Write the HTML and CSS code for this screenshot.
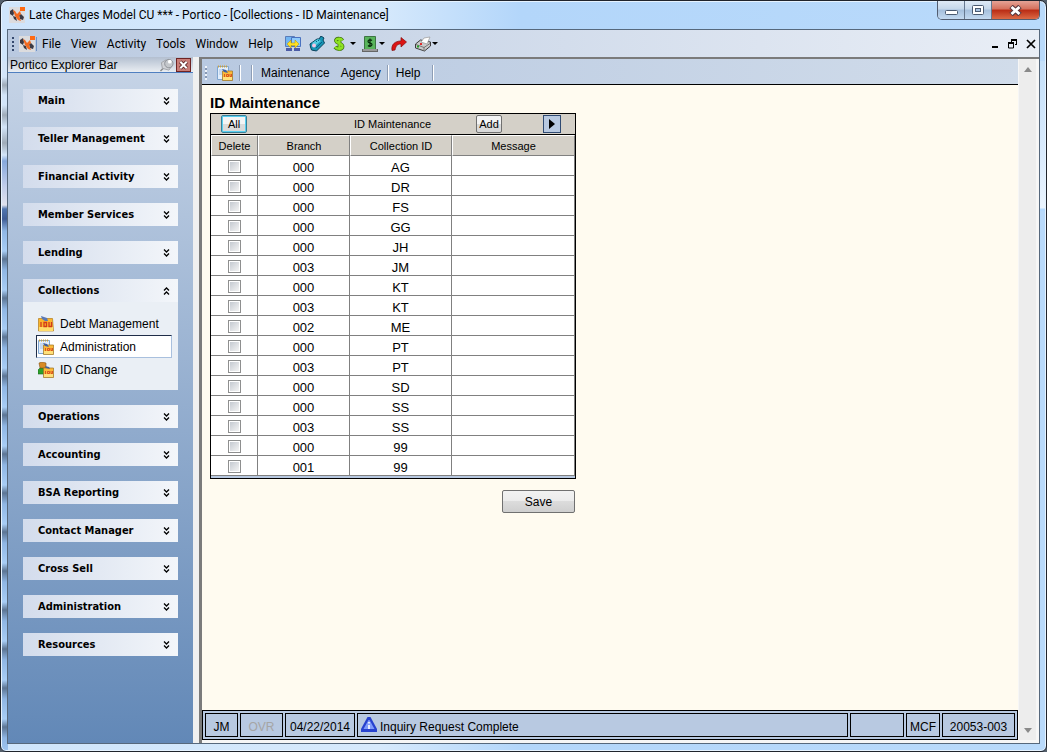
FILE: index.html
```html
<!DOCTYPE html>
<html lang="en">
<head>
    <meta charset="UTF-8">
    <meta name="viewport" content="width=device-width, initial-scale=1.0">
    <title>Late Charges Model CU *** - Portico - [Collections - ID Maintenance]</title>
    <link rel="stylesheet" href="styles.css">
</head>
<body>
    <!-- Shared icons -->
    <svg class="sprite" aria-hidden="true">
        <symbol id="i-app" viewBox="0 0 16 16">
            <rect width="16" height="16" fill="#dcdcde"/>
            <path d="M1 4l3-2 1 4-1 3-3-2zM4 9l3 1 1 4-3-2zM10 8l2-1 3 3-1 3-3-1z" fill="#3c3a44"/>
            <path d="M4 3l2 1 2 3 3-3 1 3-2 2 2 5-3-1-3-4-1-3z" fill="#f26a21"/>
            <rect x="11" width="5" height="4" fill="#ff6a13"/>
        </symbol>
        <symbol id="i-down" viewBox="0 0 7 8">
            <path d="M1 .5l2.500 2.500L6 .5M1 4.500l2.500 2.500L6 4.500" fill="none" stroke="#000" stroke-width="1.300"/>
        </symbol>
        <symbol id="i-up" viewBox="0 0 7 8">
            <path d="M1 3.500L3.500 1 6 3.500M1 7.500L3.500 5 6 7.500" fill="none" stroke="#000" stroke-width="1.300"/>
        </symbol>
        <symbol id="i-iou" viewBox="0 0 16 16">
            <path d="M.5 2.500h14l1 12.500h-15z" fill="#fbb52c" stroke="#b07c1c" stroke-width=".7"/>
            <path d="M1 11h14v4H1z" fill="#ffdc6b"/>
            <path d="M3 0l3 1 3 1 1 3-3 0-3-2z" fill="#5a78b4"/>
            <path d="M3 6v5M6 6.500v4h2.500v-4zM11 6v4.500h2.500V6" fill="none" stroke="#d23a1c" stroke-width="1.300"/>
        </symbol>
        <symbol id="i-note" viewBox="0 0 16 16">
            <path d="M.5 1.500h11v13H.5z" fill="#e2eefc" stroke="#7fa6d0"/>
            <path d="M1 1.500h10" stroke="#d0a13b" stroke-width="2" stroke-dasharray="1 1"/>
            <path d="M2 5h5M2 7h3M2 9h3" stroke="#a9c3e2"/>
            <path d="M5.500 6h10v9.500h-10z" fill="#fbb938" stroke="#9b7422" stroke-width=".7"/>
            <path d="M6 12h9v3H6z" fill="#ffe07a"/>
            <path d="M5 4l4 1 2 3-4-1z" fill="#3f5f9e"/>
            <path d="M7.500 9v3M9.500 9.500v2h2v-2zM13 9v2.500h1.500V9" fill="none" stroke="#d23a1c" stroke-width=".8"/>
        </symbol>
        <symbol id="i-person" viewBox="0 0 16 16">
            <path d="M0 12V8l2-2h5l2 2v4z" fill="#2da02b" stroke="#1d661d" stroke-width=".6"/>
            <path d="M1 1l3-1 4 1v5H2z" fill="#d88a24" stroke="#855314" stroke-width=".6"/>
            <path d="M5.500 6h10v9.500h-10z" fill="#fbb938" stroke="#9b7422" stroke-width=".7"/>
            <path d="M6 12h9v3H6z" fill="#ffe07a"/>
            <path d="M7 4l4 1 1 2-4-1z" fill="#3f5f9e"/>
            <path d="M7.500 9v3M9.500 9.500v2h2v-2zM13 9v2.500h1.500V9" fill="none" stroke="#d23a1c" stroke-width=".8"/>
        </symbol>
    </svg>

    <div class="window">
        <header class="titlebar">
            <svg class="icon"><use href="#i-app"/></svg>
            <h1 class="title">Late Charges Model CU *** - Portico - [Collections - ID Maintenance]</h1>
            <div class="caption">
                <button class="cap-btn" aria-label="Minimize">
                    <svg width="13" height="11"><rect x=".5" y="5.500" width="12" height="4" rx="1" fill="#fff" stroke="#4b5a70"/></svg>
                </button>
                <button class="cap-btn" aria-label="Maximize">
                    <svg width="13" height="11"><rect x=".5" y=".5" width="11" height="9" rx="1" fill="#fff" stroke="#4b5a70"/><rect x="3.500" y="3.500" width="5" height="3" fill="#a9c3e0" stroke="#4b5a70"/></svg>
                </button>
                <button class="cap-btn cap-close" aria-label="Close">
                    <svg width="13" height="11"><path d="M2 1.500l9 8M11 1.500l-9 8" stroke="#5a3a40" stroke-width="5"/><path d="M2.500 2l8 7M10.500 2l-8 7" stroke="#fff" stroke-width="2.800"/></svg>
                </button>
            </div>
        </header>

        <div class="client">
            <nav class="menubar">
                <span class="grip"></span>
                <svg class="icon"><use href="#i-app"/></svg>
                <span class="menu-sep"></span>
                <div class="menus">
                    <button class="menu">File</button>
                    <button class="menu">View</button>
                    <button class="menu">Activity</button>
                    <button class="menu">Tools</button>
                    <button class="menu">Window</button>
                    <button class="menu">Help</button>
                </div>
                <div class="tools">
                    <button class="tool" aria-label="Computers">
                        <svg class="icon" viewBox="0 0 16 16">
                            <path d="M.5.5h9v10h-9z" fill="#72b5f2" stroke="#5a7cb8"/>
                            <path d="M6.500 1.500h9v9h-9z" fill="#8fcbfb" stroke="#4a72c0"/>
                            <path d="M1 12h6v3H1zM9 12h6v3H9z" fill="#4b5ba5"/>
                            <path d="M2 8l4-4v3h4V4l4 4-4 4V9.500H6V12z" fill="#ffe022" stroke="#b79a12" stroke-width=".6"/>
                        </svg>
                    </button>
                    <button class="tool" aria-label="Tag">
                        <svg class="icon" viewBox="0 0 16 16">
                            <path d="M1 8l7-5 2 0 2-3 3 2-1 2 1.500 3-8 8-5-1-1-3z" fill="#1795b5" stroke="#0a3f5a"/>
                            <path d="M3 7l6-4 3 2-6 5z" fill="#53cbe0"/>
                            <path d="M7 5l1 1M9 4l1 1M7 12l6-6" stroke="#0b5c86"/>
                            <circle cx="5" cy="9.500" r="2" fill="#f6c5e4"/>
                        </svg>
                    </button>
                    <button class="tool tool-drop" aria-label="Dollar">
                        <svg class="icon" viewBox="0 0 16 16">
                            <path d="M9.500 4.500C8 2 2.500 2 3 5c.5 2.500 6.500 2 6.500 5.500 0 3-5.500 3-7.500.5M6.500 1v14" fill="none" stroke="#3d6c14" stroke-width="3.800"/>
                            <path d="M9.500 4.500C8 2 2.500 2 3 5c.5 2.500 6.500 2 6.500 5.500 0 3-5.500 3-7.500.5M6.500 1.500v13" fill="none" stroke="#8ee321" stroke-width="2.300"/>
                        </svg>
                        <span class="arrow"></span>
                    </button>
                    <button class="tool tool-drop" aria-label="Cash">
                        <svg class="icon" viewBox="0 0 16 16">
                            <path d="M2.500.5h11v13h-11z" fill="#59b45c" stroke="#3d7542"/>
                            <path d="M10 4.500C9 3.500 6 3.500 6 5.500s4 1 4 3-3 2-4 1M8 2.500v8.500" fill="none" stroke="#07280b" stroke-width="1.200"/>
                            <path d="M0 13h16v3H0z" fill="#666"/>
                            <path d="M1 14h14" stroke="#ccc"/>
                        </svg>
                        <span class="arrow"></span>
                    </button>
                    <button class="tool" aria-label="Forward">
                        <svg class="icon" viewBox="0 0 16 16">
                            <path d="M1 14.500c-1-6 3-9.500 9-9.500V1.500L15.500 6 10 11V8c-4 0-5 2-6 6z" fill="#dc1414" stroke="#850b0b" stroke-width=".7"/>
                        </svg>
                    </button>
                    <button class="tool tool-drop" aria-label="Print">
                        <svg class="icon" viewBox="0 0 16 16">
                            <path d="M.5 8l5-4 10 2v4l-6 5-9-3z" fill="#c9c9c9" stroke="#3c3c3c"/>
                            <path d="M6 6l3-4 6-1-3 7z" fill="#fff" stroke="#999" stroke-width=".7"/>
                            <path d="M1 8.500l8 3 6-4M9 11v4" fill="none" stroke="#777"/>
                            <path d="M5 7h2v2H5z" fill="#e02b2b"/>
                            <path d="M2 9.500h2v2H2z" fill="#22a326"/>
                        </svg>
                        <span class="arrow"></span>
                    </button>
                </div>
                <div class="mdi">
                    <button class="mdi-btn" aria-label="Minimize child"><svg width="10" height="10"><path d="M2 8h6" stroke="#000" stroke-width="2"/></svg></button>
                    <button class="mdi-btn" aria-label="Restore child"><svg width="10" height="10"><path d="M3 1.500h6M3.500 3V1M8.500 1v5M7 5.500h2M.5 4v5h5V4M0 4.500h6" fill="none" stroke="#000"/><path d="M3 1h6M0 4h6" stroke="#000" stroke-width="2"/></svg></button>
                    <button class="mdi-btn" aria-label="Close child"><svg width="10" height="10"><path d="M1 1l8 8M9 1l-8 8" stroke="#000" stroke-width="1.700"/></svg></button>
                </div>
            </nav>

            <div class="workspace">
                <aside class="explorer">
                    <div class="explorer-head">
                        <span>Portico Explorer Bar</span>
                        <button class="pin" aria-label="Pin">
                            <svg width="16" height="14" viewBox="0 0 16 15"><path d="M1 14l5-5" stroke="#888" stroke-width="1.500"/><path d="M2 5l5-3 6 7-3 4-7-2z" fill="#d0d2d6" stroke="#a0a3a8"/><circle cx="10" cy="6" r="4.500" fill="#c4c7cb" stroke="#8b8e94"/><circle cx="11" cy="4" r="2" fill="#fff"/></svg>
                        </button>
                        <button class="close" aria-label="Close explorer bar">
                            <svg width="11" height="10" viewBox="0 0 11 11"><path d="M2 2l7 7M9 2L2 9" stroke="#4b1717" stroke-width="4"/><path d="M2 2l7 7M9 2L2 9" stroke="#fff" stroke-width="2.300"/></svg>
                        </button>
                    </div>
                    <div class="groups">
                        <button class="group">Main<svg class="chev"><use href="#i-down"/></svg></button>
                        <button class="group">Teller Management<svg class="chev"><use href="#i-down"/></svg></button>
                        <button class="group">Financial Activity<svg class="chev"><use href="#i-down"/></svg></button>
                        <button class="group">Member Services<svg class="chev"><use href="#i-down"/></svg></button>
                        <button class="group">Lending<svg class="chev"><use href="#i-down"/></svg></button>
                        <div class="group-open">
                            <button class="group">Collections<svg class="chev"><use href="#i-up"/></svg></button>
                            <div class="links">
                                <a class="link" href="#"><svg class="icon"><use href="#i-iou"/></svg>Debt Management</a>
                                <a class="link selected" href="#"><svg class="icon"><use href="#i-note"/></svg>Administration</a>
                                <a class="link" href="#"><svg class="icon"><use href="#i-person"/></svg>ID Change</a>
                            </div>
                        </div>
                        <button class="group">Operations<svg class="chev"><use href="#i-down"/></svg></button>
                        <button class="group">Accounting<svg class="chev"><use href="#i-down"/></svg></button>
                        <button class="group">BSA Reporting<svg class="chev"><use href="#i-down"/></svg></button>
                        <button class="group">Contact Manager<svg class="chev"><use href="#i-down"/></svg></button>
                        <button class="group">Cross Sell<svg class="chev"><use href="#i-down"/></svg></button>
                        <button class="group">Administration<svg class="chev"><use href="#i-down"/></svg></button>
                        <button class="group">Resources<svg class="chev"><use href="#i-down"/></svg></button>
                    </div>
                </aside>

                <div class="pane">
                    <div class="view">
                        <nav class="toolbar">
                            <span class="grip grip-light"></span>
                            <svg class="icon"><use href="#i-note"/></svg>
                            <span class="bar"></span>
                            <span class="bar"></span>
                            <div class="actions">
                                <button class="action">Maintenance</button>
                                <button class="action">Agency</button>
                            </div>
                            <span class="bar"></span>
                            <button class="action">Help</button>
                            <span class="bar bar-end"></span>
                        </nav>

                        <main class="content">
                            <h2 class="heading">ID Maintenance</h2>
                            <form class="form">
                                <div class="grid">
                                    <div class="grid-title">
                                        <button type="button" class="small-btn focus">All</button>
                                        <span class="grid-name">ID Maintenance</span>
                                        <button type="button" class="small-btn">Add</button>
                                        <button type="button" class="next" aria-label="Next"><svg width="6" height="10"><path d="M0 0l6 5-6 5z"/></svg></button>
                                    </div>
                                    <table class="ids">
                                        <thead>
                                            <tr><th class="c-del">Delete</th><th class="c-branch">Branch</th><th class="c-id">Collection ID</th><th>Message</th></tr>
                                        </thead>
                                        <tbody>
                                            <tr><td><input type="checkbox" aria-label="Delete 000 AG"></td><td>000</td><td>AG</td><td></td></tr>
                                            <tr><td><input type="checkbox" aria-label="Delete 000 DR"></td><td>000</td><td>DR</td><td></td></tr>
                                            <tr><td><input type="checkbox" aria-label="Delete 000 FS"></td><td>000</td><td>FS</td><td></td></tr>
                                            <tr><td><input type="checkbox" aria-label="Delete 000 GG"></td><td>000</td><td>GG</td><td></td></tr>
                                            <tr><td><input type="checkbox" aria-label="Delete 000 JH"></td><td>000</td><td>JH</td><td></td></tr>
                                            <tr><td><input type="checkbox" aria-label="Delete 003 JM"></td><td>003</td><td>JM</td><td></td></tr>
                                            <tr><td><input type="checkbox" aria-label="Delete 000 KT"></td><td>000</td><td>KT</td><td></td></tr>
                                            <tr><td><input type="checkbox" aria-label="Delete 003 KT"></td><td>003</td><td>KT</td><td></td></tr>
                                            <tr><td><input type="checkbox" aria-label="Delete 002 ME"></td><td>002</td><td>ME</td><td></td></tr>
                                            <tr><td><input type="checkbox" aria-label="Delete 000 PT"></td><td>000</td><td>PT</td><td></td></tr>
                                            <tr><td><input type="checkbox" aria-label="Delete 003 PT"></td><td>003</td><td>PT</td><td></td></tr>
                                            <tr><td><input type="checkbox" aria-label="Delete 000 SD"></td><td>000</td><td>SD</td><td></td></tr>
                                            <tr><td><input type="checkbox" aria-label="Delete 000 SS"></td><td>000</td><td>SS</td><td></td></tr>
                                            <tr><td><input type="checkbox" aria-label="Delete 003 SS"></td><td>003</td><td>SS</td><td></td></tr>
                                            <tr><td><input type="checkbox" aria-label="Delete 000 99"></td><td>000</td><td>99</td><td></td></tr>
                                            <tr><td><input type="checkbox" aria-label="Delete 001 99"></td><td>001</td><td>99</td><td></td></tr>
                                        </tbody>
                                    </table>
                                </div>
                                <button type="button" class="save">Save</button>
                            </form>
                        </main>

                        <footer class="status">
                            <span class="cell cell-user">JM</span>
                            <span class="cell cell-ovr">OVR</span>
                            <span class="cell cell-date">04/22/2014</span>
                            <span class="cell cell-msg">
                                <svg class="icon" viewBox="0 0 16 16"><path d="M6.500 0h3L16 12v3H0v-3z" fill="#2742cf"/><path d="M7.500 3h1l5 9h-11z" fill="#7f9bfa"/><path d="M8 5v1.500M8 8v4" stroke="#fff" stroke-width="1.600"/></svg>
                                <span>Inquiry Request Complete</span>
                            </span>
                            <span class="cell cell-blank"></span>
                            <span class="cell cell-code">MCF</span>
                            <span class="cell cell-num">20053-003</span>
                        </footer>
                    </div>
                    <div class="scroll">
                        <svg width="8" height="5"><path d="M0 5l4-5 4 5z" fill="#8a8a8a"/></svg>
                        <svg width="8" height="5"><path d="M0 0h8L4 5z" fill="#8a8a8a"/></svg>
                    </div>
                </div>
            </div>
        </div>
    </div>
</body>
</html>
```

FILE: styles.css
```css
* {
    box-sizing: border-box;
}

body {
    margin: 0;
    height: 100vh;
    background-color: #55606c;
    font-family: "Liberation Sans", Arial, sans-serif;
    font-size: 12px;
    color: #000;
}

button {
    font: inherit;
    color: inherit;
    background: none;
    border: none;
    padding: 0;
}

svg {
    display: block;
    flex: none;
}

.sprite {
    position: absolute;
    width: 0;
    height: 0;
}

.icon {
    width: 16px;
    height: 16px;
}

/* Window frame */
.window {
    display: flex;
    flex-direction: column;
    height: 100vh;
    padding: 0 6px 7px;
    border: 1px solid #20242c;
    border-radius: 7px 7px 6px 6px;
    box-shadow: inset 0 0 0 1px #e6f3ff;
    background:
        linear-gradient(#d3e5f9 0, #d3e5f9 16px, #9fabb8 24px, #d3e5f9 34px, #d3e5f9 44px, #9fabb8 54px, #d3e5f9 66px, #9fabb8 82px, #d3e5f9 94px, #86a8dc 100px, #c0cdea 125px, #dfe2ee 144px, #5076b0 148px, #3f5d96 158px, #8fb6e4 170px) 0 60px / 7px 170px no-repeat,
        repeating-linear-gradient(#8fb6e4 0, #a8cdf5 20px, #5c7594 28px, #8fb6e4 39px) 0 230px / 7px 100% no-repeat,
        linear-gradient(#c4e0fa, #dcecfd 100px, #eaf4fe 147px, #b3d9fe 148px) 100% 60px / 7px 150px no-repeat,
        linear-gradient(90deg, #cfe5fb 0, #d6e9fc 380px, #b3d6fa 520px, #b9dafb 100%);
}

.titlebar {
    display: flex;
    align-items: flex-start;
    height: 28px;
    padding-left: 2px;
}

.titlebar .icon {
    margin-top: 6px;
}

.title {
    flex: 1;
    margin: 0 0 0 4px;
    font: 12px/28px Roboto, sans-serif;
}

.caption {
    display: flex;
    height: 19px;
    border: 1px solid #525d70;
    border-top: none;
    border-radius: 0 0 5px 5px;
    overflow: hidden;
}

.cap-btn {
    display: flex;
    align-items: center;
    justify-content: center;
    width: 27px;
    border-right: 1px solid #66788f;
    background: linear-gradient(#dfeaf6 0, #c5d7ea 45%, #a5bfdc 50%, #c3d9f0 100%);
}

.cap-close {
    width: 47px;
    border-right: none;
    background: linear-gradient(#e5a396 0, #d5705c 45%, #b92b14 50%, #dc6a45 100%);
}

.client {
    flex: 1;
    display: flex;
    flex-direction: column;
    min-height: 0;
    border: 1px solid #56687c;
    background-color: #f0f0f0;
}

/* Main menu */
.menubar {
    display: flex;
    align-items: center;
    height: 27px;
    padding-left: 4px;
    background: linear-gradient(90deg, #b9c9e0, #e9eef6);
}

.grip {
    width: 2px;
    height: 14px;
    margin-right: 5px;
    background: repeating-linear-gradient(#35496e 0, #35496e 2px, transparent 2px, transparent 4px);
}

.menu-sep {
    width: 1px;
    height: 14px;
    margin-left: 1px;
    background-color: #6f93c8;
}

.menus {
    display: flex;
    gap: 10px;
    padding-left: 5px;
    font: 12px/20px Roboto, sans-serif;
}

.tools {
    display: flex;
    gap: 8px;
    padding-left: 12px;
}

.tool {
    display: flex;
    align-items: center;
}

.tool-drop {
    gap: 1px;
    margin-right: -2px;
}

.arrow {
    border: 3px solid transparent;
    border-top-color: #000;
    border-bottom: none;
}

.mdi {
    display: flex;
    gap: 8px;
    margin-left: auto;
    padding-right: 3px;
}

.workspace {
    flex: 1;
    display: flex;
    min-height: 0;
}

/* Explorer bar */
.explorer {
    flex: none;
    display: flex;
    flex-direction: column;
    width: 185px;
}

.explorer-head {
    display: flex;
    align-items: center;
    height: 16px;
    padding-left: 2px;
    border-bottom: 1px solid #4f7fc0;
    line-height: 16px;
    background: linear-gradient(#b3bfd0, #e9edf2);
}

.pin {
    margin-left: auto;
}

.close {
    display: flex;
    align-items: center;
    justify-content: center;
    width: 15px;
    height: 14px;
    margin: 0 2px 0 1px;
    border: 1px solid #6e2323;
    background-color: #c97d77;
}

.groups {
    flex: 1;
    display: flex;
    flex-direction: column;
    gap: 15px;
    padding: 16px 15px;
    background: linear-gradient(#c5d3e6, #6288b7);
}

.group {
    display: flex;
    align-items: center;
    justify-content: space-between;
    width: 100%;
    height: 23px;
    padding: 0 8px 0 15px;
    font: bold 11px/23px "DejaVu Sans Condensed", "DejaVu Sans", sans-serif;
    background: linear-gradient(90deg, #d3dcec, #f3f6fa);
}

.chev {
    width: 7px;
    height: 8px;
}

.links {
    padding: 10px 6px 9px 13px;
    background-color: #eaeff5;
}

.link {
    display: flex;
    align-items: center;
    gap: 6px;
    height: 23px;
    padding-left: 1px;
    border: 1px solid transparent;
    color: #000;
    text-decoration: none;
}

.selected {
    background-color: #fff;
    border-color: #1f2d48 #a9c0de #a9c0de #1f2d48;
}

/* Document pane */
.pane {
    flex: 1;
    display: flex;
    min-width: 0;
    margin-left: 6px;
    padding-bottom: 3px;
    border: solid #7b7b7b;
    border-width: 2px 0 0 3px;
    background-color: #f6f6f6;
}

.view {
    flex: 1;
    display: flex;
    flex-direction: column;
    min-width: 0;
}

.toolbar {
    display: flex;
    align-items: center;
    height: 26px;
    padding: 2px 0 0 3px;
    border-bottom: 1px solid #000;
    background: linear-gradient(90deg, #b8c9e1, #d1dcea);
}

.grip-light {
    margin-right: 10px;
    background: repeating-linear-gradient(#eef3fa 0, #eef3fa 2px, #8798b3 2px, #8798b3 4px);
}

.bar {
    width: 2px;
    height: 16px;
    margin-left: 6px;
    margin-right: 4px;
    border-left: 1px solid #8d9db5;
    border-right: 1px solid #fff;
}

.actions {
    display: flex;
    gap: 11px;
    padding-left: 4px;
}

.action {
    padding-top: 1px;
    line-height: 20px;
}

.bar + .action {
    margin-left: 3px;
}

.bar-end {
    margin-left: 12px;
}

.content {
    flex: 1;
    padding: 8px;
    background-color: #fffbf0;
}

.heading {
    margin: 0;
    font: bold 15px/20px "Liberation Sans", Arial, sans-serif;
}

.form {
    display: flex;
    flex-direction: column;
    align-items: flex-end;
    width: 366px;
    max-width: 100%;
}

.grid {
    width: 100%;
    padding-bottom: 2px;
    border: 1px solid #000;
    background-color: #b8c9e1;
}

.grid-title {
    display: flex;
    align-items: center;
    height: 21px;
    padding: 0 14px 0 10px;
    border-bottom: 1px solid #000;
    font-size: 11px;
    background-color: #d4d0c8;
}

.grid-name {
    flex: 1;
    padding-left: 62px;
    text-align: center;
}

.small-btn {
    width: 26px;
    height: 18px;
    border: 1px solid #707070;
    border-radius: 2px;
    line-height: 16px;
    background: linear-gradient(#f4f4f4 50%, #dadada 50%);
}

.focus {
    border-color: #3a7f98;
    box-shadow: inset 0 0 0 1px #58d0f0;
}

.next {
    display: flex;
    align-items: center;
    justify-content: center;
    width: 18px;
    height: 18px;
    margin-left: 41px;
    border: 1px solid #2f4a72;
    background-color: #b8c9e1;
}

.ids {
    width: 100%;
    table-layout: fixed;
    border-spacing: 0;
    background-color: #fff;
    text-align: center;
}

.ids th,
.ids td {
    height: 20px;
    padding: 0;
    border-right: 1px solid #808080;
    border-bottom: 1px solid #808080;
    line-height: 15px;
}

.ids td {
    padding-top: 4px;
    font-size: 13px;
}

.ids th {
    height: 21px;
    padding-top: 1px;
    border-top: 1px solid #fff;
    border-left: 1px solid #fff;
    font-size: 11px;
    font-weight: normal;
    background-color: #d4d0c8;
}

.c-del {
    width: 47px;
}

.c-branch {
    width: 92px;
}

.c-id {
    width: 102px;
}

.ids input {
    appearance: none;
    display: block;
    width: 13px;
    height: 13px;
    margin: 0 auto 2px;
    border: 1px solid #8e8f8f;
    background: linear-gradient(135deg, #c5cad1, #f3f3f3) content-box #fff;
    padding: 1px;
}

.save {
    width: 73px;
    height: 23px;
    margin: 11px 1px 0 0;
    border: 1px solid #707070;
    border-radius: 2px;
    line-height: 23px;
    background: linear-gradient(#f2f2f2 0, #ebebeb 50%, #dcdcdc 50%, #cfcfcf 100%);
}

/* Status bar */
.status {
    display: flex;
    gap: 2px;
    height: 30px;
    padding: 2px;
    border: 1px solid #000;
    background-color: #b8c9e1;
}

.cell {
    display: flex;
    align-items: center;
    justify-content: center;
    height: 24px;
    padding-top: 3px;
    border: 1px solid #000;
    white-space: nowrap;
}

.cell-user {
    width: 33px;
}

.cell-ovr {
    width: 43px;
    color: #a5a5a5;
}

.cell-date {
    width: 70px;
}

.cell-msg {
    flex: 1;
    justify-content: flex-start;
    gap: 3px;
    padding: 0 0 0 3px;
}

.cell-msg span {
    padding-top: 3px;
}

.cell-blank {
    width: 54px;
}

.cell-code {
    width: 34px;
}

.cell-num {
    width: 73px;
}

/* Scroll bar */
.scroll {
    display: flex;
    flex-direction: column;
    align-items: center;
    justify-content: space-between;
    width: 17px;
    margin: 0 3px 0 1px;
    padding: 8px 0 7px;
    background-color: #ededed;
}
```
